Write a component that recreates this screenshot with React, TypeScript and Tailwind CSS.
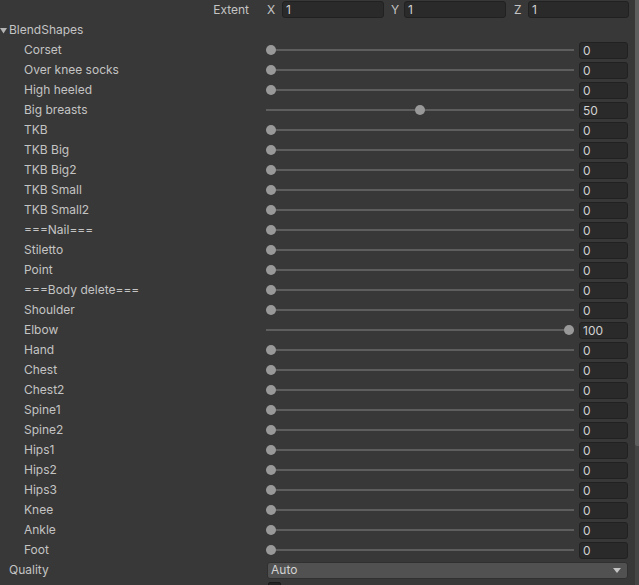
import React from "react";

const shapes: [string, number][] = [
  ["Corset", 0],
  ["Over knee socks", 0],
  ["High heeled", 0],
  ["Big breasts", 50],
  ["TKB", 0],
  ["TKB Big", 0],
  ["TKB Big2", 0],
  ["TKB Small", 0],
  ["TKB Small2", 0],
  ["===Nail===", 0],
  ["Stiletto", 0],
  ["Point", 0],
  ["===Body delete===", 0],
  ["Shoulder", 0],
  ["Elbow", 100],
  ["Hand", 0],
  ["Chest", 0],
  ["Chest2", 0],
  ["Spine1", 0],
  ["Spine2", 0],
  ["Hips1", 0],
  ["Hips2", 0],
  ["Hips3", 0],
  ["Knee", 0],
  ["Ankle", 0],
  ["Foot", 0],
];

function Field({ value, className }: { value: string; className: string }) {
  return (
    <div
      className={`h-[17px] rounded-[3px] border border-[#212121] bg-[#2a2a2a] pl-[3px] text-[12px] leading-[15px] text-[#d2d2d2] ${className}`}
    >
      {value}
    </div>
  );
}

function Slider({ value }: { value: number }) {
  return (
    <div className="relative h-[20px] w-[308px]">
      <div className="absolute left-0 right-0 top-[9px] h-[2px] bg-[#5e5e5e]" />
      <div
        className="absolute top-[5px] h-[10px] w-[10px] rounded-full bg-[#999999]"
        style={{ left: `calc((100% - 10px) * ${value / 100})` }}
      />
    </div>
  );
}

export default function App() {
  return (
    <div
      className="relative h-[585px] w-[639px] overflow-hidden bg-[#383838] text-[12px] text-[#c4c4c4]"
      style={{ fontFamily: "Inter, 'Noto Sans', sans-serif" }}
    >
      <div className="w-[635px]">
        {/* Extent row */}
        <div className="flex h-[20px] items-start pt-[1px]">
          <div className="w-[250px] pr-[1px] text-right leading-[17px]">Extent</div>
          <div className="ml-[17px] w-[15px] leading-[17px]">X</div>
          <Field value="1" className="w-[102px]" />
          <div className="ml-[7px] w-[13px] leading-[17px]">Y</div>
          <Field value="1" className="w-[102px]" />
          <div className="ml-[8px] w-[14px] leading-[17px]">Z</div>
          <Field value="1" className="w-[101px]" />
        </div>
        {/* BlendShapes header */}
        <div className="flex h-[20px] items-center">
          <svg width="7" height="7" viewBox="0 0 7 7" className="mt-[1px] ml-[0px]">
            <path d="M0 1 L7 1 L3.5 6.5 Z" fill="#b4b4b4" />
          </svg>
          <span className="ml-[2px]">BlendShapes</span>
        </div>
        {shapes.map(([name, v]) => (
          <div key={name} className="flex h-[20px] items-center">
            <div className="w-[266px] truncate pl-[24px]">{name}</div>
            <Slider value={v} />
            <Field value={String(v)} className="ml-[5px] w-[49px]" />
          </div>
        ))}
        {/* Quality */}
        <div className="flex h-[20px] items-center">
          <div className="w-[267px] pl-[9px]">Quality</div>
          <div className="flex h-[17px] w-[361px] items-center justify-between rounded-[3px] border border-[#303030] bg-[#515151] pl-[3px] pr-[6px] text-[#d2d2d2]">
            <span>Auto</span>
            <svg width="8" height="5" viewBox="0 0 8 5">
              <path d="M0 0 L8 0 L4 5 Z" fill="#c4c4c4" />
            </svg>
          </div>
        </div>
        <div className="flex h-[20px] items-start pt-[2px]">
          <div className="ml-[268px] h-[14px] w-[13px] rounded-[2px] border border-[#1a1a1a] bg-[#242424]" />
        </div>
      </div>
      {/* scrollbar */}
      <div className="absolute right-0 top-0 h-[585px] w-[4px] bg-[#454545]">
        <div className="h-[446px] w-[4px] rounded-bl-[2px] bg-[#5e5e5e]" />
      </div>
    </div>
  );
}
